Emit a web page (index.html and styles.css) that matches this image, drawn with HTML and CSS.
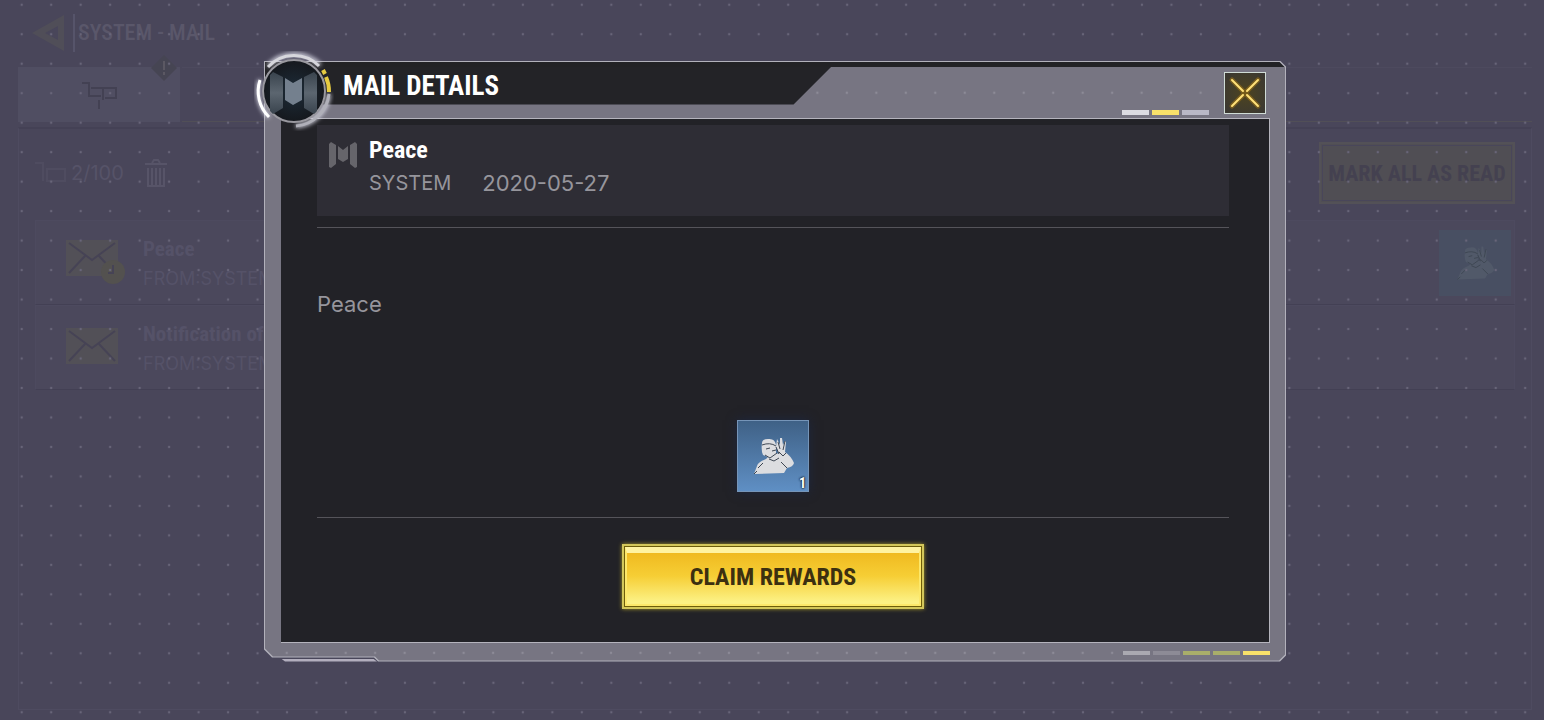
FILE: index.html
```html
<!DOCTYPE html>
<html lang="en">
<head>
<meta charset="utf-8">
<title>Mail Details</title>
<link rel="stylesheet" href="styles.css">
</head>
<body>
<svg class="defs" aria-hidden="true">
  <defs>
    <symbol id="emblem" viewBox="0 0 30 26">
      <path d="M1 2 L3 0 L8 3 V22 L3 26 L1 25Z M29 2 L27 0 L22 3 V22 L27 26 L29 25Z M10 4 L15 8 L20 4 V17 L15 20 L10 17Z"/>
    </symbol>
    <symbol id="envelope" viewBox="0 0 52 36">
      <path d="M0 0H52V36H0Z" fill="#525057"/>
      <path d="M3 3 L26 20 L49 3 M3 33 L19 16 M49 33 L33 16" fill="none" stroke="#464355" stroke-width="2"/>
    </symbol>
    <symbol id="figure" viewBox="0 0 72 72">
      <path d="M17 54 L20 46 Q21 42 29 39 L31 37 L26 35 Q24 31 25 23 Q25 19 31 19 Q38 18 39 25 L39 33 L42 34 L39 27 L40 19 L43 25 L43 18 L45 18 L46 25 L48 21 L49 22 L48 32 Q54 36 57 43 Q56 47 50 48 L47 53Z"/>
      <path class="ink" d="M25 25Q33 22 39 26 M29 29 L33 28 M35 31 L39 30 M28 35 L33 38 L40 33 M32 39L37 41L42 38 M41 22 L43 29 M48 21 L46 30 M42 32 L46 36 L49 33 M44 42 L50 48 M26 43 L21 48 M20 51 L17 54 M39 27 L42 34"/>
    </symbol>
  </defs>
</svg>

<main class="screen">
  <div class="topbar">
    <svg class="back" viewBox="0 0 32 36"><path d="M32 0V36L0 18Z M26 11L13 18L26 25Z" fill-rule="evenodd"/></svg>
    <h1 class="screen-title">SYSTEM - MAIL</h1>
  </div>
  <div class="tabs">
    <div class="tab tab-on">
      <svg class="tab-icon" viewBox="0 0 36 30"><path d="M1 3H8V16H20M10 8H22V20M20 8H35V18H24M18 20V29" /></svg>
      <svg class="alert" viewBox="0 0 26 26"><path d="M13 0L26 13L13 26L0 13Z"/><path class="alert-mark" d="M13 6V15M13 17V20"/></svg>
    </div>
    <div class="tab tab-off"></div>
  </div>
  <section class="panel">
    <div class="toolbar">
      <svg class="box" viewBox="0 0 32 24"><path d="M0 2H8V20M12 8H30V20H12Z"/></svg>
      <span class="count">2/100</span>
      <svg class="trash" viewBox="0 0 24 28"><path d="M1 5H23M8 4L10 1H14L16 4M4 9V27H20V9M8 9V26M12 9V26M16 9V26"/></svg>
      <button class="mark" type="button">MARK ALL AS READ</button>
    </div>
    <ul class="mails">
      <li class="mail">
        <svg class="mail-icon" viewBox="0 0 60 46"><use href="#envelope" width="52" height="36"/><circle cx="47" cy="32" r="12" fill="#53514f"/><path d="M47 25V33H42" fill="none" stroke="#464355" stroke-width="2"/></svg>
        <div class="mail-text"><span class="mail-name">Peace</span><span class="mail-from">FROM:SYSTEM</span></div>
        <svg class="mail-gift" viewBox="0 0 72 66"><use href="#figure" width="72" height="66"/></svg>
      </li>
      <li class="mail">
        <svg class="mail-icon" viewBox="0 0 60 46"><use href="#envelope" y="3" width="52" height="36"/></svg>
        <div class="mail-text"><span class="mail-name">Notification of Reward</span><span class="mail-from">FROM:SYSTEM</span></div>
      </li>
    </ul>
  </section>
</main>

<div class="overlay">
  <svg class="dots" aria-hidden="true">
    <defs><pattern id="dot" x="7" y="-10" width="29.48" height="29.48" patternUnits="userSpaceOnUse"><circle cx="14.7" cy="14.7" r="1.2" fill="#686579"/></pattern></defs>
    <rect width="100%" height="100%" fill="url(#dot)"/>
  </svg>
  <div class="modal" role="dialog" aria-labelledby="modal-title">
    <div class="edge">
      <div class="frame">
        <svg class="dots" aria-hidden="true">
          <defs><pattern id="frame-dot" x="7" y="16" width="29.48" height="29.48" patternUnits="userSpaceOnUse"><circle cx="14.7" cy="14.7" r="1.2" fill="#8d8b98"/></pattern></defs>
          <rect width="100%" height="100%" fill="url(#frame-dot)"/>
        </svg>
        <header class="head">
          <h2 class="title" id="modal-title">MAIL DETAILS</h2>
          <div class="bars"><i class="bar bar-white"></i><i class="bar bar-yellow"></i><i class="bar bar-silver"></i></div>
          <button class="close" type="button" aria-label="Close">
            <svg viewBox="0 0 38 38"><path class="glow" d="M6 6L17 17M32 6L21 17M6 32L17 21M32 32L21 21"/><path class="cross" d="M6 6L17 17M32 6L21 17M6 32L17 21M32 32L21 21"/></svg>
          </button>
        </header>
        <div class="body">
          <div class="card">
            <svg class="card-icon"><use href="#emblem"/></svg>
            <div class="card-text">
              <h3 class="subject">Peace</h3>
              <p class="meta"><span class="sender">SYSTEM</span><time class="date">2020-05-27</time></p>
            </div>
          </div>
          <p class="message">Peace</p>
          <div class="reward">
            <svg class="reward-art" viewBox="1 1 70 70"><use href="#figure" width="72" height="72"/></svg>
            <span class="qty">1</span>
          </div>
          <div class="actions"><button class="claim" type="button"><span class="claim-face">CLAIM REWARDS</span></button></div>
        </div>
        <div class="foot"><i class="bar bar-dim"></i><i class="bar bar-faint"></i><i class="bar bar-olive"></i><i class="bar bar-olive"></i><i class="bar bar-yellow"></i></div>
      </div>
    </div>
    <i class="strip"></i>
    <svg class="badge" viewBox="0 0 80 80" aria-hidden="true">
      <defs>
        <radialGradient id="disc"><stop offset="0" stop-color="#1d2c39"/><stop offset="1" stop-color="#15181d"/></radialGradient>
        <linearGradient id="wing" x1="0" x2="0" y1="0" y2="1"><stop offset="0" stop-color="#39434d"/><stop offset=".5" stop-color="#5c6670"/><stop offset="1" stop-color="#39434d"/></linearGradient>
        <filter id="halo" x="-20%" y="-20%" width="140%" height="140%"><feGaussianBlur stdDeviation="2"/></filter>
      </defs>
      <g filter="url(#halo)" fill="none" stroke="#d9d9e6" stroke-width="4"><path d="M14 15A36 36 0 0 1 66 14M6 29A36 36 0 0 0 15 66M75 43A36 36 0 0 1 42 75"/></g>
      <circle cx="40" cy="40" r="31" fill="url(#disc)" stroke="#99989f" stroke-width="2"/>
      <path d="M16 24L19 21L29 26V57L19 63L16 60Z M63 24L60 21L50 26V57L60 63L63 60Z" fill="url(#wing)"/>
      <path d="M31 27L39 32L48 27V49L39 54L31 49Z" fill="#74808e"/>
      <g fill="none"><path d="M14 16A35 35 0 0 1 65 15" stroke="#d6d6dc" stroke-width="3"/><path d="M6 29A36 36 0 0 0 15 66" stroke="#fff" stroke-width="3"/><path d="M75 43A36 36 0 0 1 42 75" stroke="#b0b0b9" stroke-width="3"/><path d="M69 19L71 23M72 26A36 36 0 0 1 75 41" stroke="#e6cb42" stroke-width="4"/></g>
    </svg>
  </div>
</div>
</body>
</html>
```
FILE: styles.css
```css
* { box-sizing: border-box; }
body {
  margin: 0;
  min-height: 100vh;
  position: relative;
  overflow: hidden;
  background: #49465a;
  color: #fff;
  font-family: Inter, "Liberation Sans", sans-serif;
}
h1, h2, h3, p, ul { margin: 0; padding: 0; }
button { font: inherit; cursor: pointer; }
.defs { position: absolute; width: 0; height: 0; }
.screen-title, .mark, .mail-name, .title, .subject, .claim, .qty {
  font-family: "Roboto Condensed", "Liberation Sans Narrow", "Liberation Sans", sans-serif;
  font-weight: 700;
}

/* dimmed mail list */
.screen { min-height: 100vh; display: flex; flex-direction: column; padding: 14px 12px 10px 18px; }
.topbar { display: flex; align-items: center; height: 38px; padding-left: 14px; gap: 9px; }
.back { width: 32px; height: 36px; fill: #504e58; }
.screen-title { border-left: 2px solid #56546a; padding-left: 3px; font-size: 22px; font-weight: 500; line-height: 38px; color: #5a576a; }
.tabs { display: flex; margin-top: 15px; height: 55px; gap: 2px; }
.tab-on { position: relative; width: 162px; background: #504e62; display: grid; place-items: center; }
.tab-icon { width: 36px; height: 30px; fill: none; stroke: #434153; stroke-width: 2; }
.alert { position: absolute; right: 3px; top: -12px; width: 26px; height: 26px; fill: #464553; }
.alert-mark { stroke: #5b5863; stroke-width: 2; }
.tab-off { flex: 1; border-top: 1px solid #4d4a5e; border-bottom: 1px solid #514f57; }
.panel { flex: 1; margin-top: 5px; padding: 14px 16px; border: 1px solid #4e4b60; border-top: 2px solid #444155; }
.toolbar { display: flex; align-items: center; height: 60px; color: #565368; }
.box { width: 32px; height: 24px; fill: none; stroke: #4f4c60; stroke-width: 2; }
.count { margin-left: 4px; font-size: 20px; }
.trash { width: 24px; height: 28px; margin-left: 20px; fill: none; stroke: #575468; stroke-width: 2; }
.mark { margin-left: auto; width: 196px; height: 62px; padding: 0; background: #504e54; border: 2px solid #535157; outline: 1px solid #49465a; outline-offset: -4px; color: #444150; font-size: 22px; white-space: nowrap; }
.mails { margin-top: 17px; list-style: none; }
.mail { display: flex; align-items: center; height: 85px; padding: 0 3px 0 30px; background: #4b485c; border: 1px solid #4d4a5f; border-bottom-color: #434054; }
.mail-icon { width: 60px; height: 46px; }
.mail-text { flex: 1; margin-left: 17px; display: flex; flex-direction: column; color: #555268; }
.mail-name { font-size: 21px; line-height: 32px; }
.mail-from { font-size: 18px; line-height: 28px; }
.mail-gift { width: 72px; height: 66px; background: #484f62; fill: #515969; }

/* dialog */
.overlay { position: absolute; inset: 0; display: flex; align-items: center; justify-content: center; padding: 2px 0 0 6px; }
.dots { position: absolute; inset: 0; width: 100%; height: 100%; }
.modal { position: relative; width: 66.45%; }
.edge, .frame {
  clip-path: polygon(0 0, calc(100% - 6px) 0, 100% 6px, 100% calc(100% - 6px), calc(100% - 6px) 100%, 114px 100%, 110px calc(100% - 4px), 8px calc(100% - 4px), 0 calc(100% - 12px));
}
.edge { padding: 1px; background: #b2b1bb; }
.frame { position: relative; background: #777582; }
.head, .body, .foot { position: relative; }
.head {
  display: flex;
  height: 56px;
  padding-right: 19px;
  border-top: 5px solid #222225;
}
.title {
  width: 56.6%;
  height: 38px;
  padding-left: 78px;
  background: #232327;
  clip-path: polygon(0 0, 100% 0, calc(100% - 38px) 100%, 0 100%);
  font-size: 27px;
  line-height: 38px;
}
.bars { margin-left: auto; align-self: flex-end; display: flex; gap: 3px; padding-bottom: 3px; }
.bar { width: 27px; height: 5px; }
.bar-white { background: #dcdce2; }
.bar-yellow { background: #f8e16a; }
.bar-silver { background: #b9b8c6; }
.bar-dim { background: #aaa9b1; }
.bar-faint { background: #8d8b96; }
.bar-olive { background: #a9ae6a; }
.close { width: 42px; height: 42px; margin: 5px 0 0 15px; padding: 0; border: 1px solid #d0dcd6; background: radial-gradient(#4d4420, #393733); display: grid; place-items: center; }
.close svg { width: 38px; height: 38px; fill: none; stroke-linecap: round; }
.glow { stroke: #a87a16; stroke-width: 5; opacity: .5; }
.cross { stroke: #ffe178; stroke-width: 2; }
.body {
  margin: 0 15px 0 16px;
  padding: 6px 40px 33px 36px;
  border: 1px solid #b5b4bd;
  border-left-width: 0;
  background: #222227;
}
.card { display: flex; height: 91px; padding: 10px 11px; gap: 11px; background: #2e2d35; }
.card-icon { width: 30px; height: 26px; margin-top: 7px; fill: #66656b; }
.subject { font-size: 24px; line-height: 30px; }
.meta { display: flex; gap: 31px; color: #96959c; line-height: 36px; }
.sender { font-size: 20px; }
.date { font-size: 22px; }
.message { margin-top: 11px; padding-top: 60px; min-height: 193px; border-top: 1px solid #55545a; font-size: 22px; line-height: 32px; color: #96959c; }
.reward { position: relative; width: 72px; height: 72px; margin: 0 auto; border: 1px solid #7695b8; background: linear-gradient(#3f6186, #5f8fc4); box-shadow: 0 0 10px #1d2740; }
.reward-art { display: block; width: 70px; height: 70px; fill: #dcdde0; }
.ink { fill: none; stroke: #3d4652; stroke-width: 1; }
.mail-gift .ink { stroke: #4a5064; }
.qty { position: absolute; right: 2px; bottom: 0; font-size: 14px; line-height: 16px; text-shadow: 0 0 2px #000, 0 0 2px #000; }
.actions { display: flex; justify-content: center; margin-top: 25px; padding-top: 26px; border-top: 1px solid #55545a; }
.claim { width: 302px; height: 65px; padding: 1px; border: 2px solid #d3c75a; background: #6d5d0a; box-shadow: 0 0 4px #a7992c; color: #3c3010; font-size: 24px; }
.claim-face { display: grid; place-items: center; height: 100%; background: linear-gradient(#f0ba20, #f6ce35 45%, #fcf184 95%); border: 2px solid #fce86a; border-top: 6px solid #fff3a0; padding-bottom: 2px; }
.foot { display: flex; justify-content: flex-end; align-items: center; gap: 3px; height: 18px; padding: 3px 15px 0 0; }
.foot .bar { height: 4px; }
.strip { position: absolute; left: 17px; bottom: 0; width: 96px; height: 3px; background: #b2aebd; clip-path: polygon(0 0, 92px 0, 100% 100%, 4px 100%); }
.badge { position: absolute; left: -10px; top: -10px; width: 80px; height: 80px; }
```
